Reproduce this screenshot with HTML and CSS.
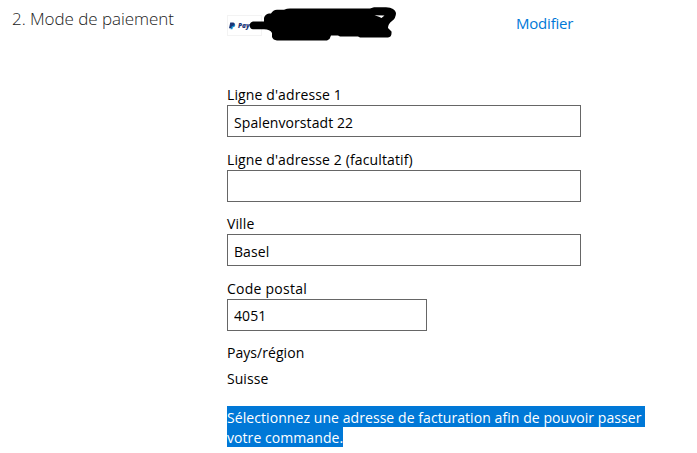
FILE: index.html
```html
<!DOCTYPE html>
<html lang="fr">
<head>
    <meta charset="UTF-8">
    <meta name="viewport" content="width=device-width, initial-scale=1.0">
    <title>Mode de paiement</title>
    <link rel="stylesheet" href="styles.css">
</head>
<body>

    <div class="payment">
        <h2 class="step-title">2. Mode de paiement</h2>

        <div class="details">
            <div class="method">
                <div class="card">
                    <svg class="logo" width="9" height="10" viewBox="0 0 9 10">
                        <path d="M3 2h3.800c1.400.5 1.500 2.200.7 3.400C6.800 6.500 5.800 6.600 5 6.600L4.400 9.300H2z" fill="#1692d2"/>
                        <path d="M1.600.5h3.600c2 0 2.400 1.300 1.900 2.700C6.600 4.900 5.200 5.300 3.500 5.300L2.800 8H0z" fill="#1b3678"/>
                    </svg>
                    <span class="brand">Pay</span>
                </div>
                <!-- masked account -->
                <svg class="mask" width="170" height="45" viewBox="227 0 170 45">
                    <path d="M253 21.500H264V18Q265 14 269 13.500H271Q273 10 277 9.700H284Q287 8.400 290 8.400H370L374 7.300H386Q395 8 396 13Q396 18 392 21Q388 24 388 28L391.500 31.500Q392 37 388 37.500H360L358 36.500H340L338 35.500H331L329.500 39L327 40.500H277Q273 40 272 37V33Q270 29.300 264 29.300H253Q250 29 249.500 25.500Q250 22 253 21.500Z"/>
                    <path class="notch" d="M374.500 15.300L384.500 15.600L381.500 18L379 16.700Z"/>
                </svg>
                <a class="edit" href="#">Modifier</a>
            </div>

            <form class="address">
                <div class="field">
                    <label for="line1">Ligne d'adresse 1</label>
                    <input type="text" id="line1" value="Spalenvorstadt 22">
                </div>
                <div class="field">
                    <label for="line2">Ligne d'adresse 2 (facultatif)</label>
                    <input type="text" id="line2">
                </div>
                <div class="field">
                    <label for="city">Ville</label>
                    <input type="text" id="city" value="Basel">
                </div>
                <div class="field">
                    <label class="zip-label" for="zip">Code postal</label>
                    <input class="short" type="text" id="zip" value="4051">
                </div>
            </form>

            <div class="country">Pays/région</div>
            <div class="country">Suisse</div>

            <p class="message"><span class="line first">Sélectionnez une adresse de facturation afin de pouvoir passer </span><br><span class="line second">votre commande.</span></p>
        </div>
    </div>

</body>
</html>
```
FILE: styles.css
```css
body {
    margin: 0;
    background-color: white;
    color: #000;
    font-family: "Segoe UI", "Open Sans", "Noto Sans", sans-serif;
    font-size: 14px;
    line-height: 20px;
}

.payment {
    display: flex;
}

.step-title {
    width: 215px;
    margin: 0 12px 0 0;
    padding: 7px 0 0 12px;
    box-sizing: border-box;
    flex: none;
    font-size: 17px;
    font-weight: 300;
    line-height: 24px;
    letter-spacing: -0.06px;
    color: #222;
    white-space: nowrap;
}

.details {
    width: 420px;
}

.method {
    display: flex;
    position: relative;
    height: 84px;
}

.card {
    display: flex;
    align-items: center;
    box-sizing: border-box;
    width: 35px;
    height: 21px;
    margin-top: 15px;
    padding-left: 1px;
    border: 1px solid #f3f3f3;
    overflow: hidden;
}

.logo {
    flex: none;
    width: 7px;
    height: 8px;
}

.brand {
    margin-left: 2px;
    color: #1b3678;
    font-size: 6.5px;
    font-weight: 800;
    font-style: italic;
    line-height: 8px;
}

.mask {
    position: absolute;
    left: 0;
    top: 0;
}

.notch {
    fill: white;
}

.edit {
    margin: 13px 0 0 254px;
    color: #0078d7;
    font-size: 15px;
    letter-spacing: -0.2px;
    text-decoration: none;
}

.field {
    height: 64.6px;
}

label {
    display: block;
    width: max-content;
    height: 21px;
    line-height: 22px;
    letter-spacing: 0.12px;
}

.zip-label {
    letter-spacing: 0.25px;
}

input {
    display: block;
    box-sizing: border-box;
    width: 354px;
    height: 32px;
    padding: 2px 6px 0;
    border: 1px solid #666;
    background-color: white;
    color: #000;
    font: inherit;
    letter-spacing: 0.08px;
}

.short {
    width: 200px;
}

.country {
    height: 26px;
    line-height: 22px;
    letter-spacing: 0.05px;
}

.message {
    margin: 12px 0 0;
    line-height: 20px;
    white-space: nowrap;
}

.line {
    display: inline-block;
    background-color: #0078d7;
    color: white;
    white-space: pre;
    vertical-align: top;
}

.first {
    height: 21px;
    line-height: 23px;
    letter-spacing: 0.07px;
}

.second {
    height: 20px;
    line-height: 21px;
    letter-spacing: 0.07px;
}
```
